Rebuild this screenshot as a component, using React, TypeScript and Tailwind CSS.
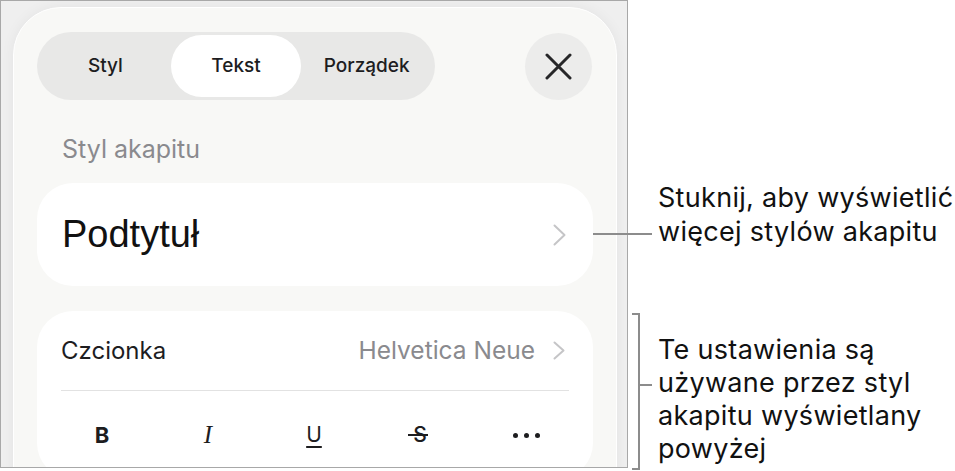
import React from "react";

const ui = { fontFamily: "Inter, 'Noto Sans', sans-serif" };
const helv = { fontFamily: "'Liberation Sans', Arial, sans-serif" };

function Chevron({ w = 13, h = 22 }: { w?: number; h?: number }) {
  return (
    <svg width={w} height={h} viewBox={`0 0 ${w} ${h}`} fill="none">
      <polyline
        points={`1.5,1.5 ${w - 1.5},${h / 2} 1.5,${h - 1.5}`}
        stroke="#c5c5c7"
        strokeWidth="2"
        strokeLinecap="round"
        strokeLinejoin="round"
      />
    </svg>
  );
}

function CloseIcon() {
  return (
    <svg width="27" height="27" viewBox="0 0 27 27" fill="none">
      <path d="M2 2 L25 25 M25 2 L2 25" stroke="#262628" strokeWidth="3" strokeLinecap="round" />
    </svg>
  );
}

function Segmented() {
  const tabs = ["Styl", "Tekst", "Porządek"];
  return (
    <div className="flex h-[68px] w-[398px] items-center rounded-full bg-[#e8e8e7] p-[3px]">
      {tabs.map((t) => (
        <div
          key={t}
          className={
            t === "Tekst"
              ? "flex h-[62px] flex-1 items-center justify-center rounded-full bg-white text-[19px] font-medium text-[#1d1d1f]"
              : "flex h-[62px] flex-1 items-center justify-center rounded-full text-[19px] font-medium text-[#1d1d1f]"
          }
        >
          {t}
        </div>
      ))}
    </div>
  );
}

function FormatRow() {
  return (
    <div className="flex h-[88px] items-center pl-[12px]">
      <div className="flex w-[106px] justify-center">
        <span className="text-[22px] font-bold text-[#1d1d1f]">B</span>
      </div>
      <div className="flex w-[106px] justify-center">
        <span className="text-[25px] italic text-[#1d1d1f]" style={{ fontFamily: "'Liberation Serif', serif" }}>
          I
        </span>
      </div>
      <div className="flex w-[106px] justify-center">
        <span className="text-[21px] text-[#1d1d1f] underline decoration-[1.5px] underline-offset-[4px]">U</span>
      </div>
      <div className="flex w-[106px] justify-center">
        <span className="relative text-[21px] font-medium text-[#1d1d1f]">
          S
          <span className="absolute left-[-5px] right-[-1px] top-[15px] h-[1.5px] bg-[#1d1d1f]" />
        </span>
      </div>
      <div className="flex w-[106px] justify-center gap-[6px]">
        <span className="h-[5px] w-[5px] rounded-full bg-[#1d1d1f]" />
        <span className="h-[5px] w-[5px] rounded-full bg-[#1d1d1f]" />
        <span className="h-[5px] w-[5px] rounded-full bg-[#1d1d1f]" />
      </div>
    </div>
  );
}

function Panel() {
  return (
    <div className="h-[520px] w-[604px] rounded-[48px] border border-white bg-[#f8f8f6] px-[23px] pt-[24px] shadow-[0_0_14px_rgba(0,0,0,0.05)]">
      <div className="flex items-center justify-between">
        <Segmented />
        <div className="mr-[1px] flex h-[67px] w-[67px] items-center justify-center rounded-full bg-[#ececeb]">
          <CloseIcon />
        </div>
      </div>

      <div className="pl-[25px] pt-[31px] text-[25px] leading-[36px] text-[#8a8a8e]">Styl akapitu</div>

      <div className="mt-[16px] flex h-[103px] items-center justify-between rounded-[36px] bg-white pl-[25px] pr-[27px]">
        <span className="text-[38px] text-[#111]" style={helv}>
          Podtytuł
        </span>
        <Chevron />
      </div>

      <div className="mt-[25px] rounded-[36px] bg-white">
        <div className="mx-[24px] flex h-[80px] items-center justify-between border-b border-[#e2e2e2]">
          <span className="text-[24px] text-[#1d1d1f]">Czcionka</span>
          <div className="flex items-center gap-[18px] pr-[4px]">
            <span className="text-[24.5px] text-[#8a8a8e]">Helvetica Neue</span>
            <Chevron w={12} h={19} />
          </div>
        </div>
        <FormatRow />
      </div>
    </div>
  );
}

export default function App() {
  return (
    <div className="relative flex h-[471px] w-[955px] overflow-hidden bg-white" style={ui}>
      <div className="h-[468px] w-[628px] shrink-0 overflow-hidden border border-[#a8a8a8] bg-[#efefef] pl-[12px] pt-[6px]">
        <Panel />
      </div>

      <div className="flex flex-col pl-[30px] text-[27px] tracking-[0.3px] text-[#111]">
        <div className="pt-[181px] leading-[34px]">
          Stuknij, aby wyświetlić
          <br />
          więcej stylów akapitu
        </div>
        <div className="pt-[84px] leading-[33px]">
          Te ustawienia są
          <br />
          używane przez styl
          <br />
          akapitu wyświetlany
          <br />
          powyżej
        </div>
      </div>

      {/* callout leader */}
      <div className="absolute left-[593px] top-[233px] h-[2px] w-[59px] bg-[#8c8c8c]" />
      {/* bracket */}
      <div className="absolute left-[632px] top-[313px] h-[157px] w-[8px] border-y-2 border-r-2 border-[#8c8c8c]" />
      <div className="absolute left-[640px] top-[384px] h-[2px] w-[12px] bg-[#8c8c8c]" />
    </div>
  );
}
